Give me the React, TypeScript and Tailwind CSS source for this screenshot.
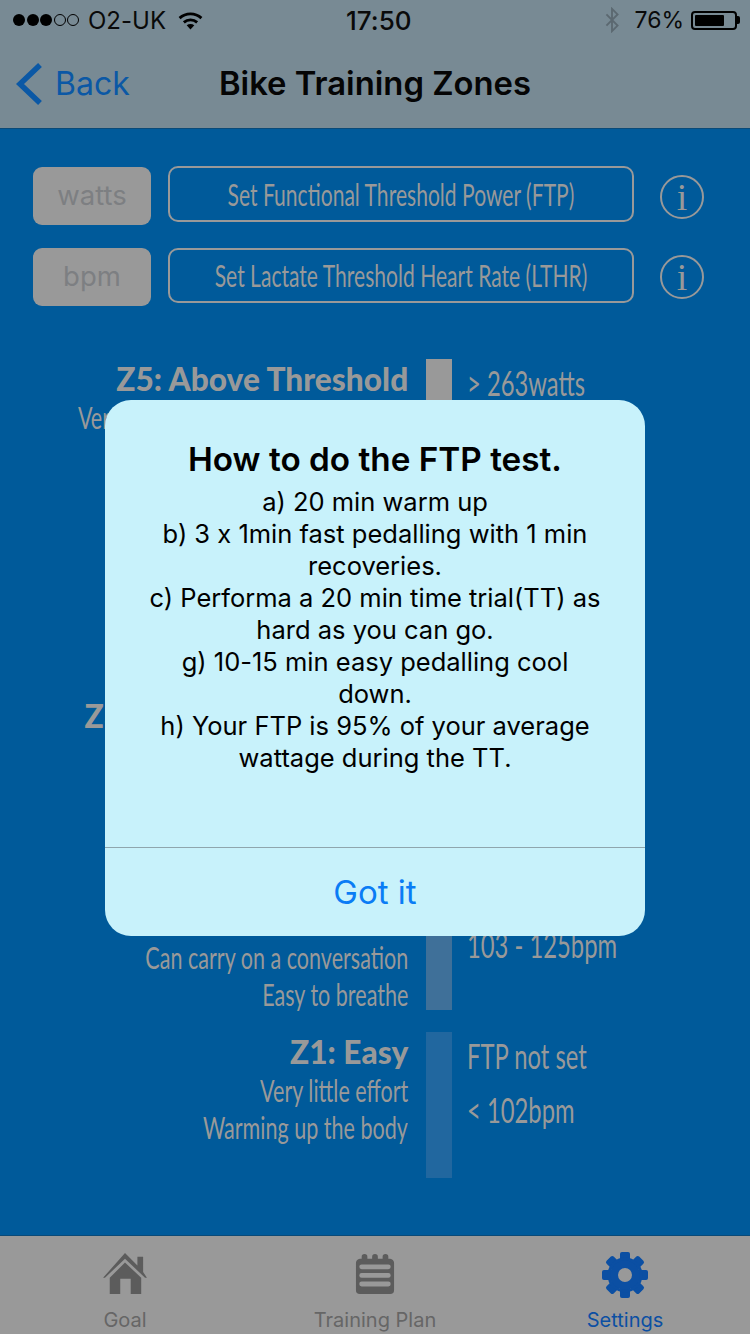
import React from "react";

const futura = "font-['Lato','Liberation_Sans',sans-serif]";
const sf = "font-['Inter','Liberation_Sans',sans-serif] [font-feature-settings:'calt'_0]";

function Zone({ title, lines, bar, right, rightPad = "pt-[4px]" }: { title: string; lines: string[]; bar: string; right: string[]; rightPad?: string }) {
  return (
    <div className={`flex h-[146px] ${futura} text-[#999999]`}>
      <div className="w-[408px] shrink-0 flex flex-col items-end whitespace-nowrap">
        <div className="h-[40px] text-[33px] leading-[38px] font-black scale-x-[0.96] origin-right">{title}</div>
        {lines.map((l) => (
          <div key={l} className="h-[37px] text-[31px] leading-[37px] scale-x-[0.695] origin-right">{l}</div>
        ))}
      </div>
      <div className={`w-[26px] ml-[18px] shrink-0 ${bar}`} />
      <div className={`ml-[15px] flex flex-col gap-[16px] text-[35px] leading-[38px] whitespace-nowrap ${rightPad}`}>
        {right.map((r) => (
          <div key={r} className="scale-x-[0.68] origin-left">{r}</div>
        ))}
      </div>
    </div>
  );
}

function Info() {
  return (
    <div className="w-[44px] h-[44px] rounded-full border-2 border-[#999999] flex items-center justify-center font-['Liberation_Serif',serif] text-[38px] leading-none text-[#999999]">i</div>
  );
}

export default function App() {
  const unit = `w-[118px] h-[58px] rounded-[9px] bg-[#999999] flex items-center justify-center ${sf} text-[27.5px] text-[#7d7f82]`;
  const label = `ml-[17px] w-[466px] rounded-[10px] border-2 border-[#999999] flex items-center justify-center whitespace-nowrap ${futura} text-[31px] text-[#999999]`;
  return (
    <div className={`relative w-[750px] h-[1334px] overflow-hidden flex flex-col bg-[#005a9a] ${sf}`}>
      <header className="h-[129px] shrink-0 bg-[#788a94] border-b border-[#0a4a78] flex flex-col">
        <div className="relative h-[40px] flex items-center text-[24px] text-[#0a0a0a]">
          <div className="flex items-center ml-[13px] gap-[1.5px]">
            {[0, 1, 2].map((i) => (
              <span key={i} className="w-[12px] h-[12px] rounded-full bg-black" />
            ))}
            {[0, 1].map((i) => (
              <span key={i} className="w-[12px] h-[12px] rounded-full border border-black" />
            ))}
          </div>
          <span className="ml-[9px] pt-[1px]">O2-UK</span>
          <svg width="25" height="19" viewBox="0 0 26 20" className="ml-[12px]" fill="none" stroke="#000" strokeWidth="3">
            <path d="M1.5 7.5C8 1.5 18 1.5 24.5 7.5" />
            <path d="M6 12c4-3.5 10-3.5 14 0" />
            <path d="M13 19.5l-4-4.5c2.4-1.6 5.6-1.6 8 0z" fill="#000" stroke="none" />
          </svg>
          <span className="absolute left-[346px] top-[1px] text-[26px] font-medium">17:50</span>
          <div className="ml-auto mr-[10px] flex items-center">
            <svg width="16" height="26" viewBox="0 0 16 28" fill="none" stroke="#5b6870" strokeWidth="2">
              <path d="M2 8l12 12-6 6V2l6 6L2 20" />
            </svg>
            <span className="ml-[14px] pt-[1px] text-[23px]">76%</span>
            <div className="ml-[7px] w-[46px] h-[19px] border-2 border-black rounded-[4px] p-[2px] flex">
              <div className="w-[76%] bg-black rounded-[1px]" />
            </div>
            <div className="w-[3px] h-[8px] bg-black rounded-r-[2px]" />
          </div>
        </div>
        <div className="relative flex-1 flex items-center">
          <svg width="28" height="44" viewBox="0 0 28 44" className="ml-[15px] -mt-[1px]" fill="none" stroke="#0b58a5" strokeWidth="5.5">
            <path d="M25 3L5 22l20 19" />
          </svg>
          <span className="ml-[12px] text-[32px] text-[#0b58a5]">Back</span>
          <span className="absolute left-0 right-0 text-center text-[32.8px] font-semibold text-[#050505]">Bike Training Zones</span>
        </div>
      </header>

      <main className="flex-1 flex flex-col pl-[33px]">
        <div className="mt-[38px] flex flex-col gap-[23px]">
          <div className="flex items-start">
            <div className={unit}>watts</div>
            <div className={`${label} h-[56px] -mt-[1px]`}><span className="scale-x-[0.68]">Set Functional Threshold Power (FTP)</span></div>
            <div className="ml-[26px] mt-[8px]"><Info /></div>
          </div>
          <div className="flex items-start">
            <div className={unit}>bpm</div>
            <div className={`${label} h-[55px]`}><span className="scale-x-[0.68]">Set Lactate Threshold Heart Rate (LTHR)</span></div>
            <div className="ml-[26px] mt-[7px]"><Info /></div>
          </div>
        </div>
        <div className="-ml-[33px] mt-[53px] flex flex-col gap-[22.25px]">
          <Zone title="Z5: Above Threshold" lines={["Very hard effort, gasping for breath", "Cannot hold a conversation"]} bar="bg-[#999999]" right={["> 263watts", "> 170bpm"]} />
          <Zone title="Z4: Threshold" lines={["Hard effort", "Breathing hard"]} bar="bg-[#7d8c98]" right={["220 - 263watts", "154 - 170bpm"]} />
          <Zone title="Z3: Moderately Harder" lines={["Steady effort", "Breathing deeper"]} bar="bg-[#607e99]" right={["165 - 220watts", "126 - 153bpm"]} />
          <Zone title="Z2: Moderate" lines={["Moderate effort", "Can carry on a conversation", "Easy to breathe"]} bar="bg-[#3f7099]" right={["FTP not set", "103 - 125bpm"]} rightPad="pt-[7px]" />
          <Zone title="Z1: Easy" lines={["Very little effort", "Warming up the body"]} bar="bg-[#21679f]" right={["FTP not set", "< 102bpm"]} />
        </div>
      </main>

      <footer className="h-[99px] shrink-0 bg-[#999999] border-t border-[#0a4a78] grid grid-cols-3 text-[20px]">
        <div className="flex flex-col items-center text-[#666666]">
          <svg width="44" height="41" viewBox="0 0 46 43" className="mt-[17px]" fill="#5c5c5c">
            <path d="M23 0L36 13V4h6v16l4 6h-2L23 6 2 26H0z" />
            <path d="M23 10L40 26v17H29V27H18v16H7V26z" />
          </svg>
          <span className="mt-[14px] leading-[24px]">Goal</span>
        </div>
        <div className="flex flex-col items-center text-[#666666]">
          <svg width="40" height="40" viewBox="0 0 42 42" className="mt-[18px]" fill="#5c5c5c">
            <path fillRule="evenodd" d="M5 5h2V3a3 3 0 0 1 6 0v2h5V3a3 3 0 0 1 6 0v2h5V3a3 3 0 0 1 6 0v2h2a5 5 0 0 1 4 4v29a4 4 0 0 1-4 4H5a4 4 0 0 1-4-4V9a5 5 0 0 1 4-4zM7 11a2 2 0 0 0 0 5h28a2 2 0 0 0 0-5zM7 20a2 2 0 0 0 0 5h28a2 2 0 0 0 0-5zM7 29a2 2 0 0 0 0 5h28a2 2 0 0 0 0-5z" />
          </svg>
          <span className="mt-[14px] leading-[24px]">Training Plan</span>
        </div>
        <div className="flex flex-col items-center text-[#0b4fa3]">
          <svg width="46" height="46" viewBox="-23 -23 46 46" className="mt-[16px]">
            {[0, 45, 90, 135, 180, 225, 270, 315].map((a) => (
              <rect key={a} x="-5" y="-23" width="10" height="12" rx="2" fill="#0b4fa3" transform={`rotate(${a})`} />
            ))}
            <circle r="11" fill="none" stroke="#0b4fa3" strokeWidth="8" />
            <circle r="16" fill="none" stroke="#0b4fa3" strokeWidth="3" />
          </svg>
          <span className="mt-[10px] leading-[24px]">Settings</span>
        </div>
      </footer>

      <div className="absolute left-[105px] top-[400px] w-[540px] h-[536px] rounded-[26px] bg-[#c8f2fb] flex flex-col">
        <div className="h-[447px] px-[40px] pt-[38px] text-center text-black">
          <div className="text-[33.3px] leading-[42px] font-semibold">How to do the FTP test.</div>
          <div className="mt-[6px] text-[25.5px] leading-[32px]">
            <div>a) 20 min warm up</div>
            <div>b) 3 x 1min fast pedalling with 1 min recoveries.</div>
            <div>c) Performa a 20 min time trial(TT) as hard as you can go.</div>
            <div>g) 10-15 min easy pedalling cool down.</div>
            <div>h) Your FTP is 95% of your average wattage during the TT.</div>
          </div>
        </div>
        <div className="flex-1 pt-[1px] border-t border-[#8fa6ad] flex items-center justify-center text-[33px] text-[#0a7cf5]">Got it</div>
      </div>
    </div>
  );
}
